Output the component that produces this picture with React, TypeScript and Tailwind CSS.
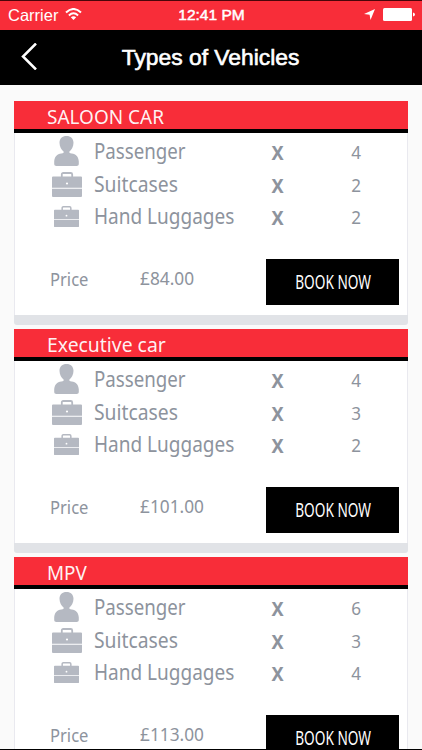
import React from 'react';

type Vehicle = {
    name: string;
    nameClass: string;
    passengers: number;
    suitcases: number;
    handLuggages: number;
    price: string;
};

const vehicles: Vehicle[] = [
    { name: 'SALOON CAR', nameClass: 'scale-x-[0.925]', passengers: 4, suitcases: 2, handLuggages: 2, price: '£84.00' },
    { name: 'Executive car', nameClass: 'scale-x-[0.945]', passengers: 4, suitcases: 3, handLuggages: 2, price: '£101.00' },
    { name: 'MPV', nameClass: 'scale-x-[0.92]', passengers: 6, suitcases: 3, handLuggages: 4, price: '£113.00' },
];

const PersonIcon: React.FC = () => (
    <svg className="h-[30px] w-[25px]" viewBox="0 0 25 30" fill="#b5b9c2">
        <path d="M12.500 0C8.300 0 5.500 2.700 5.500 6.700c0 3.800 1.900 7 4.100 8.800v1.300c-.500.500-1.300.600-2.300.700C3 18 .400 21 .200 25.500v2.300C.200 29.300 1 30 2.400 30h20.200c1.400 0 2.200-.700 2.200-2.200v-2.300c-.200-4.500-2.800-7.500-7.100-8-1-.100-1.800-.200-2.300-.700v-1.300c2.200-1.800 4.100-5 4.100-8.800 0-4-2.800-6.700-7-6.700z" />
    </svg>
);

const CaseIcon: React.FC<{ className: string }> = ({ className }) => (
    <svg className={className} viewBox="0 0 30 25" preserveAspectRatio="none">
        <path d="M9.800 5V2.500Q9.800 1 11.300 1h7.400q1.500 0 1.500 1.500V5" fill="none" stroke="#b5b9c2" strokeWidth="1.800" />
        <path d="M1 4.500h28q1 0 1 1V15.700H0V5.500q0-1 1-1zM0 16.700h30V24q0 1-1 1H1q-1 0-1-1z" fill="#b5b9c2" />
        <circle cx="15" cy="11.500" r="1.100" fill="#fff" />
    </svg>
);

type RowProps = { icon: React.ReactNode; label: string; labelClass: string; count: number; className: string };

const Row: React.FC<RowProps> = ({ icon, label, labelClass, count, className }) => (
    <div className={`grid grid-cols-[27px_52px_177px_79px] items-center whitespace-nowrap ${className}`}>
        <span />
        <span className="flex w-[49px] justify-center">{icon}</span>
        <span className={`w-max origin-left text-[21px] leading-[28px] ${labelClass}`}>{label}</span>
        <div className="flex">
            <span className="w-[13px] pt-[4px] text-center text-[19.5px] font-bold leading-[24px]">
                <span className="inline-block scale-x-[0.93]">X</span>
            </span>
            <span className="ml-[67px] w-[12px] pt-[3px] text-center text-[18px] leading-[24px]">
                <span className="inline-block scale-x-[0.95]">{count}</span>
            </span>
        </div>
    </div>
);

const VehicleCard: React.FC<{ vehicle: Vehicle }> = ({ vehicle }) => (
    <article className="h-[224px] shrink-0 overflow-hidden rounded-b-[3px] bg-[#e1e3e7]">
        <h2 className="h-8 border-b-4 border-black bg-[#f82d39] pl-[32.500px] text-[20.5px] leading-[31px] text-white/95">
            <span className={`inline-block origin-left ${vehicle.nameClass}`}>{vehicle.name}</span>
        </h2>
        <div className="h-[182px] border-x border-[#e9e9ef] bg-white pt-px">
            <Row icon={<PersonIcon />} label="Passenger" labelClass="scale-x-[0.89]" count={vehicle.passengers} className="h-[34px]" />
            <Row icon={<CaseIcon className="h-[25px] w-[30px]" />} label="Suitcases" labelClass="scale-x-[0.92]" count={vehicle.suitcases} className="h-[32px]" />
            <Row icon={<CaseIcon className="h-[21px] w-[25px]" />} label="Hand Luggages" labelClass="scale-x-[0.905]" count={vehicle.handLuggages} className="h-[32px]" />
            <div className="mt-[27px] flex h-[46px] pl-[35px] pr-[8px]">
                <span className="w-[90px] text-[18px] leading-[40px]">
                    <span className="inline-block origin-left scale-x-[0.92]">Price</span>
                </span>
                <span className="w-[127px] text-[18px] leading-[39px]">
                    <span className="inline-block origin-left scale-x-[0.96]">{vehicle.price}</span>
                </span>
                <button className="flex h-[46px] w-[133px] justify-center bg-black pt-[13px] text-[19.5px] leading-[20px] text-white">
                    <span className="-mx-4 inline-block scale-x-[0.7] whitespace-nowrap">BOOK NOW</span>
                </button>
            </div>
        </div>
    </article>
);

const StatusBar: React.FC = () => (
    <div className="grid h-[30px] shrink-0 grid-cols-3 items-center border-t border-[#4a0509] bg-[#f82d39] pl-2 pr-[7px] text-white">
        <div className="flex items-center gap-[7px] text-[16.5px]">
            <span className="w-[50px]">Carrier</span>
            <svg className="mb-[3px] h-3 w-[17px]" viewBox="0 0 17 12" fill="none" stroke="currentColor" strokeWidth="2">
                <path d="M1 4.500Q8.500-2.500 16 4.500M3.900 7.400Q8.500 3.200 13.100 7.400" />
                <path d="M8.500 12 5.800 9.300Q8.500 7.200 11.200 9.300z" fill="currentColor" stroke="none" />
            </svg>
        </div>
        <span className="whitespace-nowrap pb-[2px] text-center text-[15.5px] [-webkit-text-stroke:0.5px_white]">12:41 PM</span>
        <div className="flex items-center justify-end gap-[8px] pb-[2px]">
            <svg className="h-[11px] w-[11px]" viewBox="0 0 11 11" fill="currentColor">
                <path d="M11 0 6.500 11 5.600 5.800 0 5z" />
            </svg>
            <svg className="h-[13px] w-[32px]" viewBox="0 0 32 13" fill="currentColor">
                <rect width="29" height="13" rx="1.500" />
                <path d="M30 4.500q2 .500 2 2t-2 2z" />
            </svg>
        </div>
    </div>
);

const App: React.FC = () => {
    return (
        <div className="flex h-[750px] w-[422px] flex-col overflow-hidden border-b border-black bg-[#fafafa] font-['Noto_Sans',sans-serif] text-[#8d939d]">
            <div className="shrink-0 font-['Liberation_Sans',sans-serif]">
                <StatusBar />
                <header className="grid h-[55px] grid-cols-[60px_1fr_60px] items-center bg-black text-white">
                    <svg className="mb-[3px] ml-[21px] h-[27px] w-4" viewBox="0 0 16 27" fill="none" stroke="currentColor" strokeWidth="2.500">
                        <path d="M15 .500 2 13.500l13 13" />
                    </svg>
                    <h1 className="text-center text-[22.5px] [-webkit-text-stroke:0.6px_white]">
                        <span className="inline-block scale-x-[1.015] whitespace-nowrap">Types of Vehicles</span>
                    </h1>
                </header>
            </div>
            <main className="flex min-h-0 flex-1 flex-col gap-1 overflow-hidden pl-[14px] pr-[14px] pt-4">
                {vehicles.map((vehicle) => (
                    <VehicleCard key={vehicle.name} vehicle={vehicle} />
                ))}
            </main>
        </div>
    );
};

export default App;
